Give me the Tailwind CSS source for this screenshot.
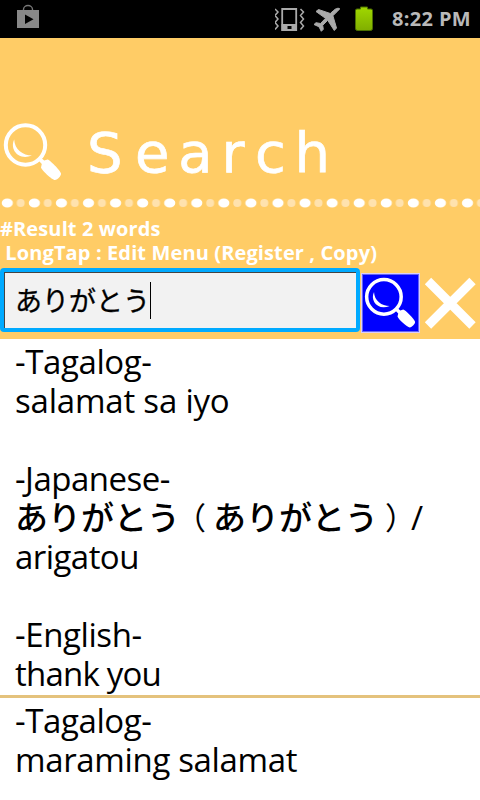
<!DOCTYPE html>
<html lang="en">
  <head>
    <meta charset="UTF-8" />
    <meta name="viewport" content="width=device-width, initial-scale=1.0" />
    <title>Search</title>
    <script src="https://cdn.jsdelivr.net/npm/@tailwindcss/browser@4"></script>
  </head>
  <body class="w-[480px] h-[800px] overflow-hidden bg-white text-black font-['Open_Sans','Noto_Sans_CJK_JP',sans-serif]">
    <!-- status bar -->
    <div class="flex h-[38px] items-center bg-black pl-[17px] pr-[9px]">
      <svg class="h-[38px] w-[22px]" viewBox="0 0 22 38">
        <path d="M6.5 11V9.500a4.500 4 0 0 1 9 0V11" fill="none" stroke="#777" stroke-width="1.4" />
        <path d="M0 10h22v18H0z" fill="#888" />
        <path d="M8 14.500v9.500l8.500-4.700z" fill="#000" />
      </svg>
      <svg class="ml-auto h-[38px] w-[32px]" viewBox="0 0 32 38">
        <g fill="none" stroke="#aaa" stroke-width="1.5">
          <path d="M7.200 9h14v21h-14z" stroke-width="1.8" />
          <path d="M0 9l3 3-3 3.500 3 3.500-3 3.500 3 3.500-3 3.500M25.500 9l3 3-3 3.500 3 3.500-3 3.500 3 3.500-3 3.500" />
        </g>
        <path d="M6.500 24h15.500v6.800h-15.500z" fill="#aaa" />
        <path d="M12.500 26h4v3h-4z" fill="#000" />
      </svg>
      <svg class="ml-[6px] h-[38px] w-[28px]" viewBox="0 0 28 38">
        <path d="M26.500 8.500c-2-.8-4.200.3-6 2.100L17.300 13.500 5.500 9.500 3 11.500l9.500 6.800-5 5.200-4.500-.8L1 24.500l5 2.300 2.300 4.500 2-2-.6-4 5-5 6.600 10.200 2.200-2.500-3.600-12.200 3.200-3.200c2-2 3.800-3.200 3.400-4.100z" fill="#aaa" stroke="#aaa" stroke-linejoin="round" />
      </svg>
      <svg class="ml-[12px] h-[38px] w-[22px]" viewBox="0 0 22 38">
        <defs>
          <linearGradient id="charge" x1="0" y1="0" x2="0" y2="1">
            <stop offset="0" stop-color="#a0d800" />
            <stop offset="1" stop-color="#80ae00" />
          </linearGradient>
        </defs>
        <path d="M7.500 7h7v2h3.500q1.500 0 1.500 1.500v18q0 2-2 2H4.500q-2 0-2-2v-18Q2.500 9 4 9h3.500z" fill="url(#charge)" stroke="#4c7000" stroke-width="1" />
      </svg>
      <span class="ml-[17px] w-[79px] whitespace-nowrap text-[20px] font-bold leading-[38px] tracking-[0.35px] text-[#b9b9b9]">8:22 PM</span>
    </div>

    <!-- header -->
    <div class="h-[301px] bg-[#ffcc66] text-white">
      <div class="flex h-[156px] pt-[80px]">
        <svg class="h-[66px] w-[66px] shrink-0" viewBox="0 0 66 66">
          <g id="lens">
            <circle cx="25.500" cy="27" r="19.700" fill="none" stroke="#fff" stroke-width="4" />
            <path d="M14.200 21.500C9.500 31 18 43 32 37.500 23 37.500 14.500 31.500 14.200 21.500z" fill="#fff" />
            <path d="M38.500 42.500l2.500-2.700 3.200 2.700 3.300-1c2 0 13 11 13.500 14 .5 2-3.500 6.500-6 6.500-3 0-13.500-10-14-12.500l.8-3.500z" fill="#fff" />
          </g>
        </svg>
        <h1 class="ml-[21px] whitespace-nowrap font-['DejaVu_Sans'] text-[56px] leading-[70px] tracking-[8.8px] [-webkit-text-stroke:0.7px_white]"><span class="tracking-[12.5px]">S</span>ea<span class="tracking-[10.5px]">r</span>ch</h1>
      </div>
      <svg class="block h-[18px] w-full" viewBox="0 0 480 18">
        <defs>
          <pattern id="dots" width="27.070" height="18" patternUnits="userSpaceOnUse">
            <ellipse cx="7.300" cy="9" rx="5.600" ry="4.600" fill="#fff" />
            <circle cx="20.700" cy="9" r="4" fill="#ffe2ae" />
          </pattern>
        </defs>
        <path d="M0 0h480v18H0z" fill="url(#dots)" />
      </svg>
      <div class="h-[55px] whitespace-pre pt-[5px] text-[20px] font-bold leading-[24px] tracking-[0.12px]"><p>#Result 2 words</p><p> LongTap : Edit Menu (Register , Copy)</p></div>
      <div class="flex h-[72px]">
        <div class="mt-[1px] flex h-[64px] w-[360px] rounded-[4px] border-4 border-[#00aaff] bg-[#f2f2f2]">
          <div class="flex w-full items-center border-l border-t border-[#444] pl-[10px] text-black">
            <span class="text-[27px] leading-[36px] [-webkit-text-stroke:0.3px_black]">ありがとう</span><i class="h-[37px] w-px bg-black"></i>
          </div>
        </div>
        <div class="ml-[1px] mt-[6px] h-[60px] w-[59px] border border-[#d9ccff] bg-[#0000ff] outline-1 -outline-offset-2 outline-[#6666f0]">
          <svg class="h-[58px] w-[57px]" viewBox="0.500 1 65 66"><use href="#lens" /></svg>
        </div>
        <svg class="ml-[4px] mt-[10px] h-[52px] w-[52px]" viewBox="0 0 52 52">
          <path d="M4 4l44.500 44.500M48.500 4L4 48.500" stroke="#fff" stroke-width="9" />
        </svg>
      </div>
    </div>

    <!-- results -->
    <ul class="whitespace-nowrap text-[33px] leading-[39px]">
      <li class="h-[359px] border-b-3 border-[#e4c27c] pl-[15px] pt-[3px]">
        <p class="tracking-[-0.4px]">-Tagalog-</p>
        <p class="tracking-[-0.2px]">salamat sa iyo</p>
        <p>&nbsp;</p>
        <p class="tracking-[-0.5px]">-Japanese-</p>
        <p class="flex h-[39px]">
          <span class="font-medium">ありがとう</span>
          <span class="w-[33px] -indent-[5px] text-[31px]">（</span>
          <span class="font-medium">ありがとう</span>
          <span class="w-[33px] indent-[7px] text-[31px]">）</span>
          <span>/</span>
        </p>
        <p class="tracking-[-0.55px]">arigatou</p>
        <p>&nbsp;</p>
        <p class="tracking-[-0.4px]">-English-</p>
        <p class="tracking-[-0.8px]">thank you</p>
      </li>
      <li class="pl-[15px] pt-[3px]">
        <p class="tracking-[-0.4px]">-Tagalog-</p>
        <p class="tracking-[-0.35px]">maraming salamat</p>
      </li>
    </ul>
  </body>
</html>
